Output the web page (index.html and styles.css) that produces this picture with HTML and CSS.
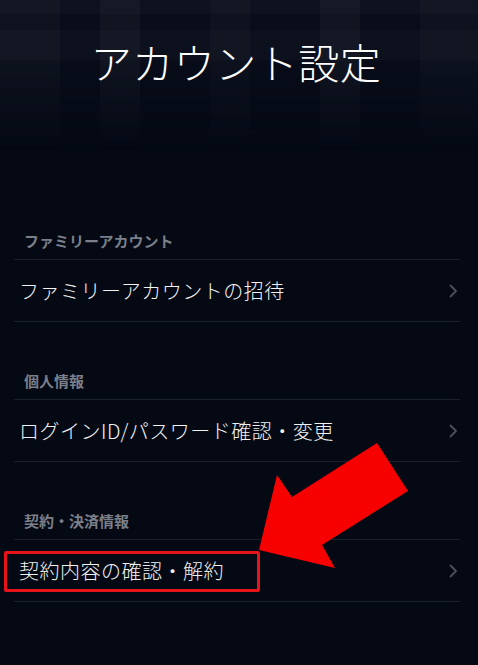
FILE: index.html
```html
<!DOCTYPE html>
<html lang="ja">
<head>
<meta charset="utf-8">
<title>アカウント設定</title>
<link rel="stylesheet" href="styles.css">
</head>
<body>
<div class="page">
  <header class="hero">
    <div class="hero-pattern"></div>
    <h1 class="title">アカウント設定</h1>
  </header>
  <main class="list">
    <section class="group">
      <div class="group-label">ファミリーアカウント</div>
      <div class="row"><span class="row-text">ファミリーアカウントの招待</span><span class="chev"><svg width="9" height="14" viewBox="0 0 9 14"><path d="M1.5 1.5 L7 7 L1.5 12.5" fill="none" stroke="#4b505b" stroke-width="1.8" stroke-linecap="round" stroke-linejoin="round"/></svg></span></div>
    </section>
    <section class="group">
      <div class="group-label">個人情報</div>
      <div class="row"><span class="row-text">ログインID/パスワード確認・変更</span><span class="chev"><svg width="9" height="14" viewBox="0 0 9 14"><path d="M1.5 1.5 L7 7 L1.5 12.5" fill="none" stroke="#4b505b" stroke-width="1.8" stroke-linecap="round" stroke-linejoin="round"/></svg></span></div>
    </section>
    <section class="group">
      <div class="group-label">契約・決済情報</div>
      <div class="row highlighted"><span class="row-text">契約内容の確認・解約</span><span class="chev"><svg width="9" height="14" viewBox="0 0 9 14"><path d="M1.5 1.5 L7 7 L1.5 12.5" fill="none" stroke="#4b505b" stroke-width="1.8" stroke-linecap="round" stroke-linejoin="round"/></svg></span></div>
    </section>
  </main>
  <div class="mark-box"></div>
  <svg class="mark-arrow" width="478" height="665" viewBox="0 0 478 665">
    <polygon points="259,550 277,475 292,497 377,443 408,491 322,545 335,568" fill="#f70000"/>
  </svg>
</div>
</body>
</html>
```
FILE: styles.css
```css
html, body {
  margin: 0;
  padding: 0;
  background: #040914;
}
body {
  font-family: "Noto Sans CJK JP", "Noto Sans", sans-serif;
  color: #f2f2f2;
}
.page {
  position: relative;
  width: 478px;
  min-height: 665px;
  overflow: hidden;
}
.hero {
  position: relative;
  height: 182px;
  box-sizing: border-box;
  padding-top: 39px;
}
.hero-pattern {
  position: absolute;
  left: 0;
  top: 0;
  right: 0;
  height: 150px;
  background-color: #080d19;
  background-image:
    linear-gradient(90deg, rgba(255,255,255,0.025) 0 60px, transparent 60px 100px, rgba(255,255,255,0.03) 100px 140px, transparent 140px 210px, rgba(255,255,255,0.02) 210px 250px, transparent 250px 320px, rgba(255,255,255,0.03) 320px 360px, transparent 360px 420px, rgba(255,255,255,0.02) 420px 478px),
    linear-gradient(180deg, rgba(255,255,255,0.02) 0 14px, transparent 14px 30px, rgba(255,255,255,0.015) 30px 60px, transparent 60px);
  -webkit-mask-image: linear-gradient(180deg, #000 0, #000 60px, transparent 150px);
  mask-image: linear-gradient(180deg, #000 0, #000 60px, transparent 150px);
}
.title {
  position: relative;
  margin: 0;
  padding-right: 6px;
  text-align: center;
  font-size: 41px;
  line-height: 45px;
  font-weight: 300;
  color: #ffffff;
  letter-spacing: 0.5px;
}
.list {
  margin: 0 18px 0 14px;
}
.group-label {
  padding: 48px 0 7px 10px;
  line-height: 22px;
  font-size: 15px;
  font-weight: 700;
  color: #7a7f89;
  border-bottom: 1px solid #1b212c;
}
.row {
  display: flex;
  align-items: center;
  justify-content: space-between;
  height: 61px;
  padding: 0 2px 0 5px;
  border-bottom: 1px solid #1b212c;
}
.row-text {
  font-size: 20px;
  line-height: 28px;
  font-weight: 300;
  letter-spacing: 0.5px;
  color: #f2f2f2;
}
.chev {
  display: flex;
  align-items: center;
}
.mark-box {
  position: absolute;
  left: 4px;
  top: 551px;
  width: 256px;
  height: 41px;
  box-sizing: border-box;
  border: 3px solid #e8121b;
  border-radius: 2px;
}
.mark-arrow {
  position: absolute;
  left: 0;
  top: 0;
  pointer-events: none;
}
```
